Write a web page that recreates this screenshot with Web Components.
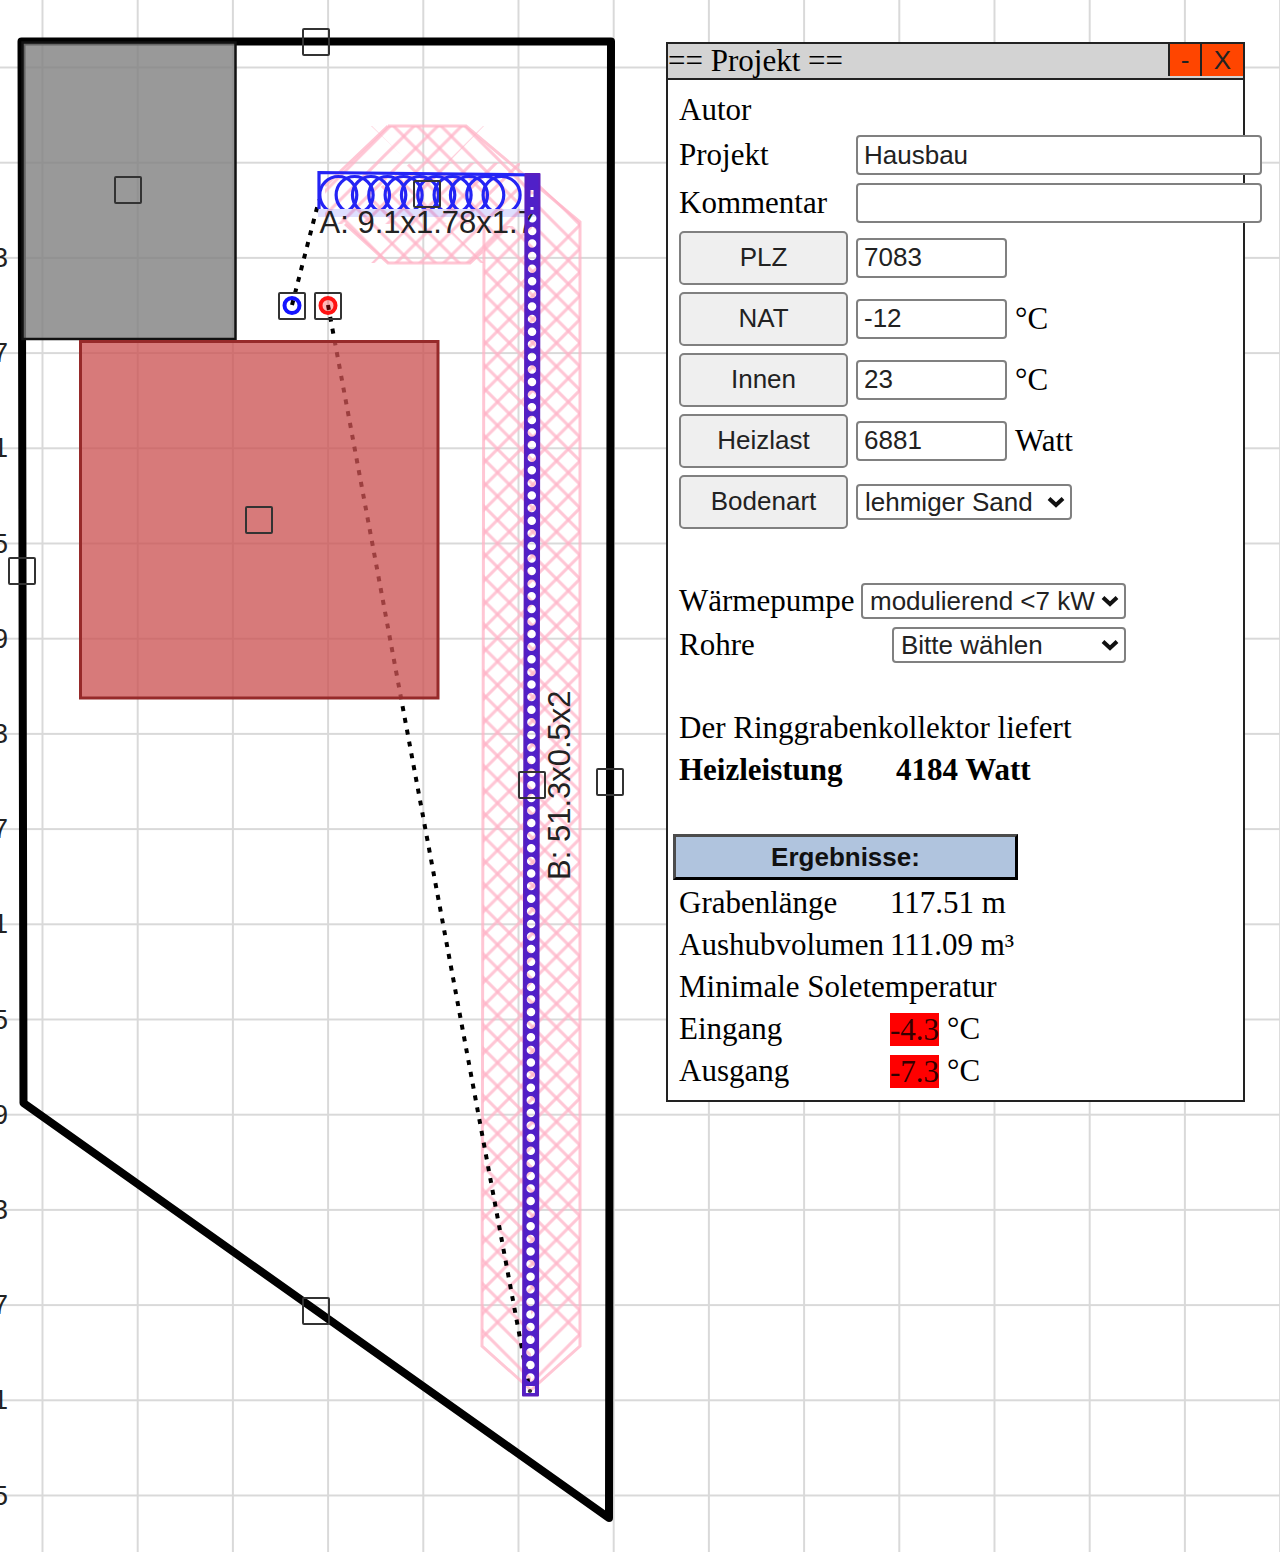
<!DOCTYPE html>
<html lang="de">
<head>
<meta charset="utf-8">
<title>Ringgrabenkollektor Planer</title>
<style>
  body { margin: 0; background: #fff; color: #000; font-family: "Liberation Serif", serif; }
</style>
</head>
<body>
<trench-planner></trench-planner>

<template id="planner-tpl">
  <style>
    :host { display: block; position: relative; min-height: 100vh; overflow: hidden;
      --ui: "Liberation Sans", sans-serif; --line: #808080; }
    plan-canvas { position: absolute; inset: 0; }
    tool-window { position: absolute; left: 666px; top: 42px; width: 579px; }
    section { display: flex; flex-direction: column; }
    .pumps { margin-top: 47px; width: 447px; }
    .yield { margin-top: 40px; }
    .results { margin-top: 43px; }
  </style>
  <plan-canvas></plan-canvas>
  <tool-window heading="== Projekt ==">
    <section>
      <value-row label="Autor"></value-row>
      <text-row label="Projekt" value="Hausbau"></text-row>
      <text-row label="Kommentar" value=""></text-row>
      <action-row label="PLZ" value="7083"></action-row>
      <action-row label="NAT" value="-12">°C</action-row>
      <action-row label="Innen" value="23">°C</action-row>
      <action-row label="Heizlast" value="6881">Watt</action-row>
      <action-row label="Bodenart" choice="lehmiger Sand"></action-row>
    </section>
    <section class="pumps">
      <choice-row label="Wärmepumpe" choice="modulierend &lt;7 kW" style="--w:265px"></choice-row>
      <choice-row label="Rohre" choice="Bitte wählen" style="--w:234px"></choice-row>
    </section>
    <section class="yield">
      <value-row label="Der Ringgrabenkollektor liefert"></value-row>
      <value-row label="Heizleistung" strong>4184 Watt</value-row>
    </section>
    <section class="results">
      <result-button>Ergebnisse:</result-button>
      <value-row label="Grabenlänge">117.51 m</value-row>
      <value-row label="Aushubvolumen">111.09 m³</value-row>
      <value-row label="Minimale Soletemperatur"></value-row>
      <value-row label="Eingang" alert="-4.3">°C</value-row>
      <value-row label="Ausgang" alert="-7.3">°C</value-row>
    </section>
  </tool-window>
</template>

<template id="canvas-tpl">
  <style>
    :host { display: block; }
    svg { display: block; width: 100%; height: 100%; font-family: "Liberation Sans", sans-serif; fill: #222; }
    .hatch { stroke: #ffb3c6; stroke-width: 3; stroke-opacity: .75; fill: none; }
    .lead { stroke: #000; stroke-width: 4; stroke-dasharray: 5 7; }
    .handle { fill: none; stroke: #333; stroke-width: 2; }
    .axis { font-size: 27px; text-anchor: end; }
    .tag { font-size: 31px; }
  </style>
  <svg role="img" aria-label="Grundstücksplan">
    <defs>
      <pattern id="grid" x="41.5" y="66.5" width="95.2" height="95.2" patternUnits="userSpaceOnUse">
        <path d="M1 0V95.2M0 1H95.2" stroke="#d9d9d9" stroke-width="2"/>
      </pattern>
      <pattern id="down" x="568.3" y="236.7" width="23.6" height="23.6" patternUnits="userSpaceOnUse">
        <path class="hatch" d="M-3 -3L27 27M-3 20.6L3 26.6M20.6 -3L26.6 3"/>
      </pattern>
      <pattern id="up" x="568.3" y="236.7" width="23.6" height="23.6" patternUnits="userSpaceOnUse">
        <path class="hatch" d="M-3 26.6L26.6 -3M-3 3L3 -3M20.6 26.6L26.6 20.6"/>
      </pattern>
      <pattern id="downA" x="380" y="136.3" width="23.8" height="23.8" patternUnits="userSpaceOnUse">
        <path class="hatch" d="M-3 -3L27 27M-3 20.8L3 26.8M20.8 -3L26.8 3"/>
      </pattern>
      <pattern id="upA" x="380" y="136.3" width="23.8" height="23.8" patternUnits="userSpaceOnUse">
        <path class="hatch" d="M-3 26.8L26.8 -3M-3 3L3 -3M20.8 26.8L26.8 20.8"/>
      </pattern>
      <clipPath id="coilClip"><rect x="316" y="165" width="226" height="44"/></clipPath>
      <mask id="pipeMask" maskUnits="userSpaceOnUse" x="500" y="160" width="60" height="1250">
        <rect x="500" y="160" width="60" height="1250" fill="#fff"/>
        <path d="M532.2 218.3L530.4 1378" stroke="#000" stroke-width="8.5" stroke-linecap="round" stroke-dasharray="0 12.6" fill="none"/>
        <path d="M530.4 1386V1393" stroke="#000" stroke-width="9"/>
        <path d="M532 190v7M532 207v3" stroke="#000" stroke-width="3"/>
      </mask>
    </defs>
    <rect width="100%" height="100%" fill="url(#grid)"/>
    <g id="axis"></g>

    <polygon fill="url(#upA)" points="388,126 484,126 448,163 520,163 520,222 470,263 371,263 410,224 325,224 325,186"/>
    <polygon fill="url(#downA)" points="371,126 466,126 540,190 482,224 445,224 484,263 388,263 340,220 410,163"/>
    <path class="hatch" d="M388 126H466L580 222V1346L531 1390L482 1346L484 226M388 126L325 186M345 224L388 263H470L484 250"/>
    <polygon fill="url(#down)" points="540,185 580,222 580,1346 531,1297 531,1390 482,1346 484,226 540,226"/>
    <polygon fill="url(#up)" points="484,226 532,226 532,270 580,222 580,1346 531,1390 531,1297 482,1346"/>

    <path d="M292 305L319 200" class="lead"/>
    <path d="M328 305L530 1392" class="lead"/>

    <path d="M21.5 41.5H611L609 1518L23.5 1103Z" fill="none" stroke="#000" stroke-width="8" stroke-linejoin="round"/>
    <rect x="22.5" y="42.5" width="213" height="296.5" fill="#808080" fill-opacity=".8" stroke="#111" stroke-width="2.5"/>
    <rect x="80.5" y="341.5" width="357.5" height="356.5" fill="#cb5252" fill-opacity=".77" stroke="#962a2a" stroke-width="3"/>

    <rect x="318" y="209" width="222" height="8" fill="#2a2af5" fill-opacity=".15"/>
    <g clip-path="url(#coilClip)" fill="none" stroke="#2424f5" stroke-width="3.2">
      <path d="M319 209V172.5L539 175"/>
      <g id="coils"></g>
    </g>
    <text class="tag" x="319.5" y="233">A: 9.1x1.78x1.7</text>
    <g mask="url(#pipeMask)">
      <path d="M525.5 174H539.5L538 1395.5H523Z" fill="#5020c8" stroke="#5a1ebe" stroke-width="2" stroke-linejoin="round"/>
    </g>
    <circle cx="530" cy="1391" r="2" fill="#333"/>
    <text class="tag" transform="translate(570 880) rotate(-90)">B: 51.3x0.5x2</text>

    <circle cx="292" cy="305.5" r="7.5" fill="none" stroke="#1414ff" stroke-width="4"/>
    <circle cx="328" cy="305.5" r="7.5" fill="#ff1414" fill-opacity=".3" stroke="#ff1414" stroke-width="4"/>
    <g id="handles"></g>
  </svg>
</template>

<template id="window-tpl">
  <style>
    :host { display: block; box-sizing: border-box; border: 2px solid #222; background: #fff; font-size: 31px; line-height: 42px; }
    header { display: flex; height: 34px; background: #d3d3d3; border-bottom: 2px solid #222; }
    h1 { flex: 1; margin: 0; font-size: 31px; font-weight: 400; line-height: 34px; white-space: nowrap; }
    button { box-sizing: border-box; height: 32px; margin: 0; padding: 0; border: 0; border-left: 2px solid #222;
      background: #ff4500; color: #222; font: 26px/32px var(--ui); }
    .min { width: 32px; } .close { width: 43px; }
    main { display: block; padding: 9px 11px 8px; }
  </style>
  <header><h1></h1><button class="min">-</button><button class="close">X</button></header>
  <main><slot></slot></main>
</template>

<script>
const define = (name, css, build) => customElements.define(name, class extends HTMLElement {
  connectedCallback() {
    if (this.shadowRoot) return;
    const root = this.attachShadow({ mode: 'open' });
    root.innerHTML = '<style>' + css + '</style>' + build(this);
  }
});
const fromTemplate = (name, id, setup) => customElements.define(name, class extends HTMLElement {
  connectedCallback() {
    if (this.shadowRoot) return;
    const root = this.attachShadow({ mode: 'open' });
    root.append(document.getElementById(id).content.cloneNode(true));
    if (setup) setup(this, root);
  }
});
const text = (el, key) => (el.getAttribute(key) || '').replace(/&/g, '&amp;').replace(/</g, '&lt;').replace(/"/g, '&quot;');

const inputCss = `input { box-sizing: border-box; height: 40px; margin: 0; padding: 0 6px; border: 2px solid var(--line);
  border-radius: 4px; background: #fff; color: #222; font: 26px var(--ui); }`;

fromTemplate('plan-canvas', 'canvas-tpl', (el, root) => {
  root.getElementById('axis').innerHTML = [...'37159371593715'].map((d, i) =>
    `<text class="axis" x="8" y="${267 + Math.round(i * 95.2)}">${d}</text>`).join('');
  root.getElementById('coils').innerHTML = Array.from({ length: 11 }, (_, i) =>
    `<circle cx="${338.3 + i * 16.33}" cy="195" r="18.5"/>`).join('');
  const spots = [[128,190],[316,42],[259,520],[22,571],[610,782],[532,785],[316,1311],[427,194],[292,306],[328,306]];
  root.getElementById('handles').innerHTML = spots.map(([x, y]) =>
    `<rect class="handle" x="${x - 13}" y="${y - 13}" width="26" height="26" rx="1"/>`).join('');
});

fromTemplate('tool-window', 'window-tpl', (el, root) => {
  root.querySelector('h1').textContent = el.getAttribute('heading');
});

define('drop-down', `
  :host { display: grid; align-items: center; }
  select, svg { grid-area: 1 / 1; }
  select { appearance: none; box-sizing: border-box; width: 100%; height: 36px; margin: 0; padding: 0 24px 0 7px;
    border: 2px solid var(--line); border-radius: 4px; background: #fff; color: #222; font: 26px/32px var(--ui); }
  svg { justify-self: end; margin-right: 7px; width: 18px; height: 12px; pointer-events: none; }`,
  el => `<select aria-label="${text(el, 'name')}"><option>${text(el, 'choice')}</option></select>
    <svg viewBox="0 0 18 12"><path d="M2 2.5L9 9L16 2.5" fill="none" stroke="#111" stroke-width="4"/></svg>`);

define('text-row', `
  :host { display: grid; grid-template-columns: 169px 406px; column-gap: 8px; align-items: center; height: 48px; }` + inputCss,
  el => `<label for="f">${text(el, 'label')}</label><input id="f" value="${text(el, 'value')}">`);

define('action-row', `
  :host { display: flex; gap: 8px; align-items: center; height: 61px; }
  button { box-sizing: border-box; width: 169px; height: 54px; margin: 0; padding: 0; border: 2px solid var(--line);
    border-radius: 5px; background: #efefef; color: #222; font: 26px var(--ui); }
  input { width: 151px; } drop-down { width: 216px; }` + inputCss,
  el => `<button id="b">${text(el, 'label')}</button>` + (el.hasAttribute('choice')
    ? `<drop-down name="${text(el, 'label')}" choice="${text(el, 'choice')}"></drop-down>`
    : `<input aria-labelledby="b" value="${text(el, 'value')}">`) + '<span><slot></slot></span>');

define('choice-row', `
  :host { display: flex; justify-content: space-between; align-items: center; height: 44px; }
  drop-down { width: var(--w); }`,
  el => `<span>${text(el, 'label')}</span><drop-down name="${text(el, 'label')}" choice="${text(el, 'choice')}"></drop-down>`);

define('value-row', `
  :host { display: flex; height: 42px; white-space: pre; }
  :host([strong]) { font-weight: 700; }
  .name { min-width: 211px; }
  :host([strong]) .name { min-width: 217px; }
  mark { align-self: center; margin-right: 8px; background: #f00; color: #300; line-height: 33px; }`,
  el => `<span class="name">${text(el, 'label')}</span>` +
    (el.hasAttribute('alert') ? `<mark>${text(el, 'alert')}</mark>` : '') + '<span><slot></slot></span>');

define('result-button', `
  :host { display: block; margin: 0 0 2px -6px; }
  button { display: block; box-sizing: border-box; width: 345px; height: 46px; margin: 0; padding: 0; border: 3px solid;
    border-color: #4c4c4c #000 #000 #4c4c4c; background: #b0c4de; color: #111; font: bold 26px var(--ui); }`,
  () => '<button><slot></slot></button>');

fromTemplate('trench-planner', 'planner-tpl');
</script>
</body>
</html>
